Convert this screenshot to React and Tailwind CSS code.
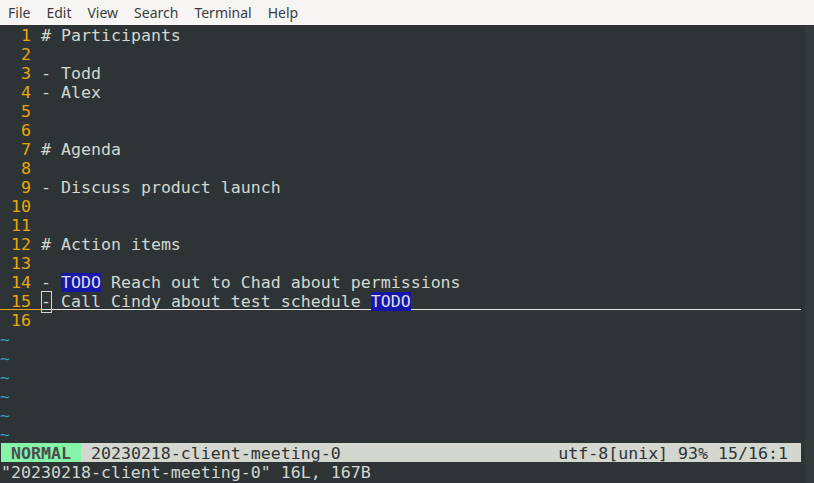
import React from 'react';

const lines = [
  '# Participants',
  '',
  '- Todd',
  '- Alex',
  '',
  '',
  '# Agenda',
  '',
  '- Discuss product launch',
  '',
  '',
  '# Action items',
  '',
  null,
  null,
  '',
];

const mono = { fontFamily: '"DejaVu Sans Mono", "Liberation Mono", monospace' };

function LineNr({ n, cursor }) {
  return (
    <span
      className={`inline-block w-[40px] h-full text-right pr-[10px] text-[#e9a70b] ${cursor ? 'border-b border-[#e9a70b]' : ''}`}
    >
      {n}
    </span>
  );
}

function Todo() {
  return <span className="bg-[#1616a8] text-[#dcdcea]">TODO</span>;
}

export default function App() {
  return (
    <div className="w-[814px] h-[483px] overflow-hidden bg-[#2e3436] flex flex-col">
      <div
        className="h-[25px] bg-[#f6f5f4] flex items-center text-[14px] text-[#3a3d3e] shrink-0"
        style={{ fontFamily: '"Noto Sans", "Open Sans", sans-serif' }}
      >
        {['File', 'Edit', 'View', 'Search', 'Terminal', 'Help'].map((m) => (
          <span key={m} className="px-2">{m}</span>
        ))}
      </div>
      <div className="flex flex-1">
        <div
          className="w-[801px] pl-[1px] text-[16.6px] leading-[21px] text-[#d3d7cf] whitespace-pre"
          style={mono}
        >
          {lines.map((l, i) => {
            const n = i + 1;
            if (n === 14) {
              return (
                <div key={n} className="h-[19px] flex">
                  <LineNr n={n} />
                  <span>- <Todo /> Reach out to Chad about permissions</span>
                </div>
              );
            }
            if (n === 15) {
              return (
                <div key={n} className="h-[19px] flex -ml-[1px]">
                  <span className="w-[1px] h-full border-b border-[#e9a70b]" />
                  <LineNr n={n} cursor />
                  <span className="flex-1 h-full border-b border-[#e6e6e6]">
                    <span className="relative">
                      -
                      <span className="absolute left-0 right-[-1px] top-[-1px] bottom-[-2px] border border-[#d3d7cf]" />
                    </span>
                    {' Call Cindy about test schedule '}
                    <Todo />
                  </span>
                </div>
              );
            }
            return (
              <div key={n} className="h-[19px] flex">
                <LineNr n={n} />
                <span>{l}</span>
              </div>
            );
          })}
          {[0, 1, 2, 3, 4, 5].map((k) => (
            <div key={k} className="h-[19px] text-[#2fa3c2] -ml-[1px]">~</div>
          ))}
          <div className="h-[19px] flex bg-[#d3d7cf] text-[#2e3436]">
            <span className="bg-[#86f5a8] text-[#4a4f51] font-bold">{' NORMAL '}</span>
            <span className="flex-1">{' 20230218-client-meeting-0'}</span>
            <span className="pr-[3px]">{'utf-8[unix] 93% 15/16:1 '}</span>
          </div>
          <div className="h-[19px]">"20230218-client-meeting-0" 16L, 167B</div>
        </div>
        <div className="w-[4px]" />
        <div className="w-[9px] bg-[#323a3c]" />
      </div>
    </div>
  );
}
